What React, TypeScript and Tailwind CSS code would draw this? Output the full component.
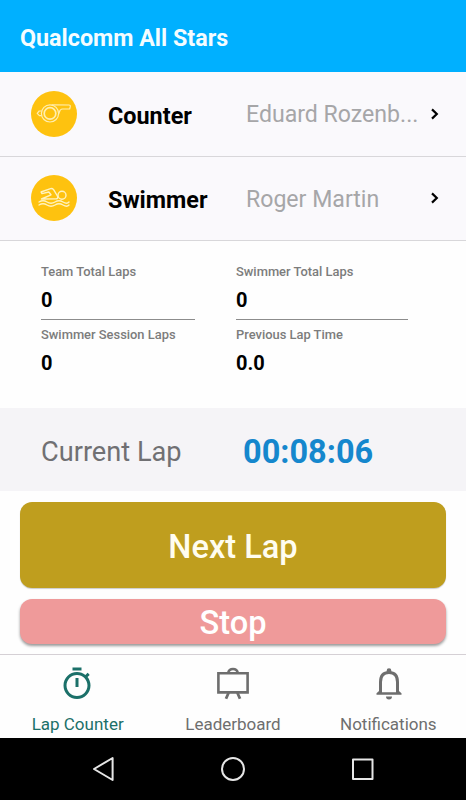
import React from 'react';

const WhistleIcon = () => (
  <svg viewBox="0 0 46 46" className="w-[46px] h-[46px]" fill="none" stroke="#ffeeb0" strokeWidth="1.2" strokeLinejoin="round">
    <circle cx="19" cy="22.4" r="8.6" />
    <circle cx="19" cy="22.4" r="5.8" strokeWidth="1.7" />
    <path d="M20.5 13.8 38 14Q39.5 14 39.3 15.4L38.7 18 31.5 18Q29 18.2 28.6 20.6L27.4 23.4" />
    <path d="M10.4 20 8.2 20 6.2 22.4 8.4 24.6 10.6 24.6" />
  </svg>
);

const SwimIcon = () => (
  <svg viewBox="0 0 46 46" className="w-[46px] h-[46px]" fill="none" stroke="#fff3c0" strokeWidth="1.4" strokeLinecap="round" strokeLinejoin="round">
    <path d="M10 17 19.6 13.6Q21.4 13.2 22.6 14.6L26.4 21Q27.4 23.4 25.4 23.8L10.5 24 20 19.8 17.8 17 11 18.6Z" />
    <circle cx="31" cy="20.2" r="4" />
    <path d="M8 27Q12 24.6 16 27T24 27T32 27T38 27" />
    <path d="M8 30Q12 27.6 16 30T24 30T32 30T38 30" />
  </svg>
);

const StopwatchIcon = () => (
  <svg viewBox="0 0 24 24" className="w-9 h-9 -translate-x-px" fill="currentColor">
    <path d="M15 1H9v2h6V1zm-4 13h2V8h-2v6zm8.03-6.61l1.42-1.42c-.43-.51-.9-.99-1.41-1.41l-1.42 1.42C16.07 4.74 14.12 4 12 4c-4.97 0-9 4.03-9 9s4.02 9 9 9 9-4.03 9-9c0-2.12-.74-4.07-1.97-5.61zM12 20c-3.87 0-7-3.13-7-7s3.13-7 7-7 7 3.13 7 7-3.13 7-7 7z" />
  </svg>
);

const BoardIcon = () => (
  <svg viewBox="0 0 36 36" className="w-9 h-9" fill="none" stroke="currentColor" strokeWidth="2.6">
    <path d="M3.4 7.2H32.6V26.4H3.4Z" />
    <path d="M13.2 6.8Q14 3 18 3T22.8 6.8" />
    <path d="M13.6 26.8 11 32.8M22.4 26.8 25 32.8" strokeWidth="2.8" />
  </svg>
);

const BellIcon = () => (
  <svg viewBox="0 0 36 36" className="w-9 h-9 translate-x-px">
    <path d="M9.5 27V16Q9.5 6.6 18 6.6T26.5 16V27" fill="none" stroke="currentColor" strokeWidth="3" />
    <path d="M15.7 6.8V4.6A2.3 2.3 0 0 1 20.3 4.6V6.8ZM5.5 28.8V27.2L8.6 24.4V26.2H27.4V24.4L30.5 27.2V28.8ZM15 30.4H21A3 3 0 0 1 15 30.4Z" fill="currentColor" />
  </svg>
);

const people = [
  { role: 'Counter', name: 'Eduard Rozenb...', icon: <WhistleIcon /> },
  { role: 'Swimmer', name: 'Roger Martin', icon: <SwimIcon /> },
];

const tabs = [
  { label: 'Lap Counter', icon: <StopwatchIcon />, color: 'text-[#1b7069]' },
  { label: 'Leaderboard', icon: <BoardIcon />, color: 'text-[#6e6e6e]' },
  { label: 'Notifications', icon: <BellIcon />, color: 'text-[#6e6e6e]' },
];

const Stat = ({ label, value }: { label: string; value: string }) => (
  <div className="h-[62px]">
    <div className="text-[12.9px] leading-4 font-medium text-[#7c7c7c]">{label}</div>
    <div className="mt-[8px] text-[20px] leading-6 font-bold text-black">{value}</div>
  </div>
);

const App = () => {
  return (
    <div className="w-[466px] h-[800px] flex flex-col overflow-hidden bg-[#fefefe] font-['Roboto',sans-serif]">
      <header className="h-[72px] shrink-0 bg-[#00b0ff] px-5 pt-[5px] flex items-center">
        <h1 className="text-[23.3px] font-bold text-[#f4fcff]">Qualcomm All Stars</h1>
      </header>

      {people.map((person) => (
        <div key={person.role} className="h-[84.5px] shrink-0 bg-[#faf9fc] border-b border-[#d8d7da] flex items-center pl-[31px] pr-[27px]">
          <div className="w-[46px] h-[46px] rounded-full bg-[#fec20f]">{person.icon}</div>
          <div className="ml-[31px] w-[138px] pt-[4px] text-[23.4px] leading-8 font-bold text-black">{person.role}</div>
          <div className="flex-1 pt-[3px] text-[23.1px] leading-8 text-[#a6a6a8] whitespace-nowrap">{person.name}</div>
          <svg viewBox="0 0 8 12" className="w-2 h-3" fill="none" stroke="#000" strokeWidth="2.2">
            <path d="M1 1.4 5.8 6 1 10.6" />
          </svg>
        </div>
      ))}

      <section className="h-[167px] shrink-0 pt-[23px] pl-[41px] flex">
        <div className="w-[154px]">
          <Stat label="Team Total Laps" value="0" />
          <div className="-mt-[7px] mb-[7px] h-px bg-[#8c8c8c]"></div>
          <Stat label="Swimmer Session Laps" value="0" />
        </div>
        <div className="ml-[41px] w-[172px]">
          <Stat label="Swimmer Total Laps" value="0" />
          <div className="-mt-[7px] mb-[7px] h-px bg-[#8c8c8c]"></div>
          <Stat label="Previous Lap Time" value="0.0" />
        </div>
      </section>

      <section className="h-[83px] shrink-0 bg-[#f5f4f7] flex items-center pl-[41px] pt-[6px]">
        <div className="w-[202px] text-[27.2px] text-[#707073]">Current Lap</div>
        <div className="text-[32.5px] font-bold text-[#1587cd]">00:08:06</div>
      </section>

      <section className="h-[163px] shrink-0 px-5 pt-[11px]">
        <button className="block w-full h-[86px] pt-[4px] rounded-xl bg-[#bf9e1e] text-[32.6px] font-medium text-[#fffdf0] shadow-[0_1px_1px_rgba(0,0,0,0.2)]">
          Next Lap
        </button>
        <button className="mt-[11px] block w-full h-[45px] rounded-xl bg-[#ef9a9a] text-[32.6px] leading-[49px] font-medium text-white shadow-[0_2px_3px_rgba(0,0,0,0.4)]">
          Stop
        </button>
      </section>

      <nav className="h-[84px] shrink-0 border-t border-[#d5d0d5] grid grid-cols-3">
        {tabs.map((tab) => (
          <div key={tab.label} className={`flex flex-col items-center pt-[11px] ${tab.color}`}>
            {tab.icon}
            <span className="mt-[10px] text-[17px] leading-6">{tab.label}</span>
          </div>
        ))}
      </nav>

      <footer className="flex-1 bg-black flex items-center">
        <svg viewBox="0 0 466 62" className="w-full h-[62px]" fill="none" stroke="#e6e6e6" strokeWidth="2">
          <path d="M94 31 112.6 20V42Z" strokeLinejoin="round" />
          <circle cx="233" cy="31" r="11" />
          <path d="M353 21.5H372.5V41H353Z" strokeLinejoin="round" />
        </svg>
      </footer>
    </div>
  );
};

export default App;
